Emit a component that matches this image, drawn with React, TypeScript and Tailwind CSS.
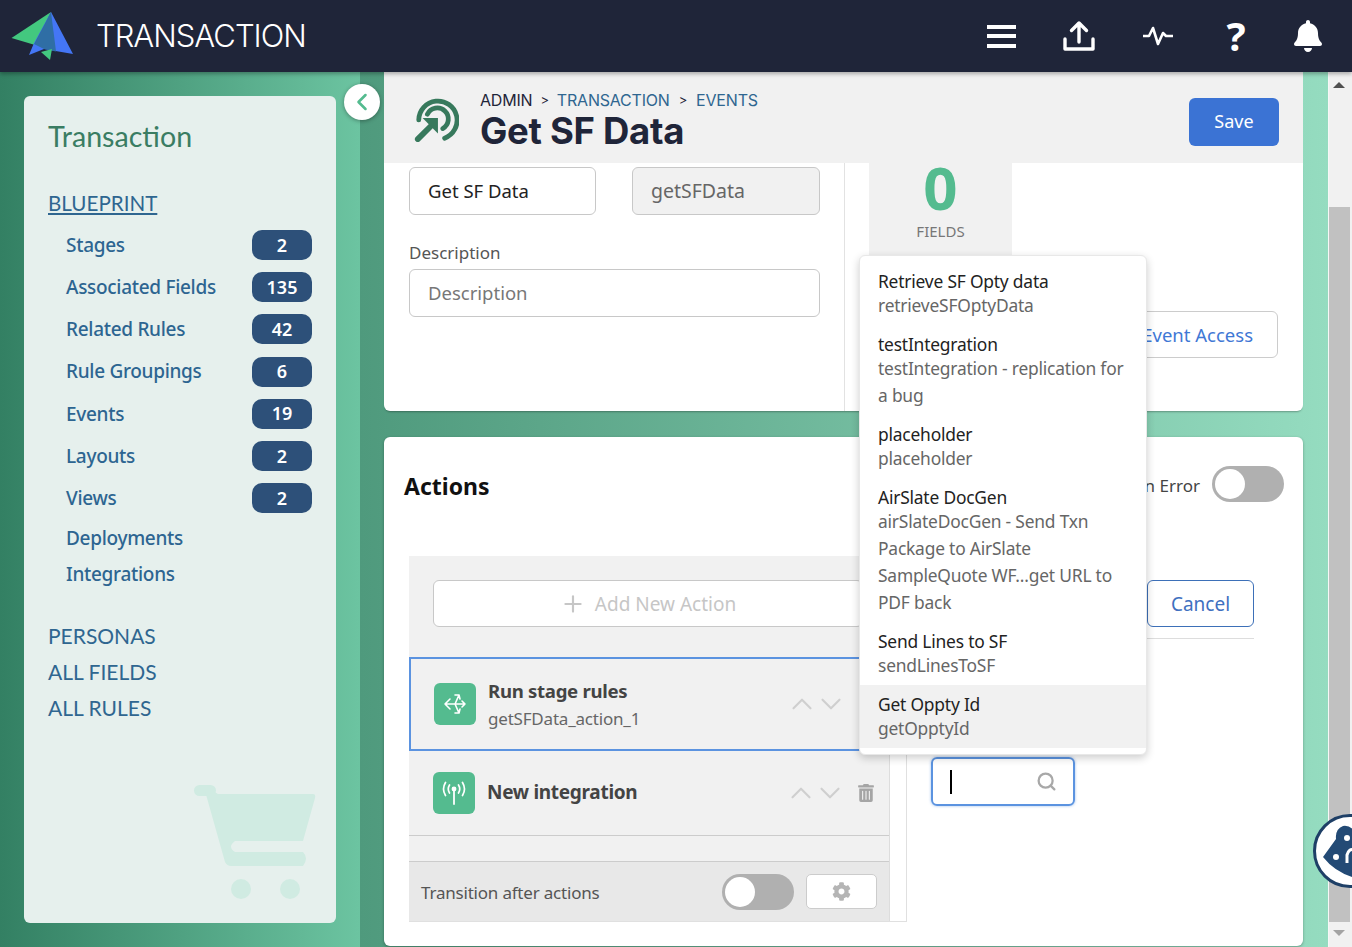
import React from "react";
import { ChevronDown, ChevronLeft, ChevronUp, Plus, Search } from "lucide-react";
import { FaBell, FaCog, FaTrashAlt } from "react-icons/fa";

const navItems = [
  { label: "Stages", count: "2" },
  { label: "Associated Fields", count: "135" },
  { label: "Related Rules", count: "42" },
  { label: "Rule Groupings", count: "6" },
  { label: "Events", count: "19" },
  { label: "Layouts", count: "2" },
  { label: "Views", count: "2" },
];

const dropdownItems = [
  { title: "Retrieve SF Opty data", sub: "retrieveSFOptyData" },
  { title: "testIntegration", sub: "testIntegration - replication for a bug" },
  { title: "placeholder", sub: "placeholder" },
  { title: "AirSlate DocGen", sub: "airSlateDocGen - Send Txn Package to AirSlate SampleQuote WF...get URL to PDF back" },
  { title: "Send Lines to SF", sub: "sendLinesToSF" },
  { title: "Get Oppty Id", sub: "getOpptyId", active: true },
];

const Toggle = () => (
  <div className="w-[72px] h-[36px] rounded-full bg-[#b0b0b0] flex items-center pl-[3px]">
    <div className="w-[30px] h-[30px] rounded-full bg-white" />
  </div>
);

const Logo = () => (
  <svg width="64" height="50" viewBox="0 0 64 50" className="shrink-0">
    <polygon points="0.5,27 40,1 24,34" fill="#43c87f" />
    <polygon points="40,1 62,43 33,38 18,44 23,32" fill="#4476f5" />
    <polygon points="40,1 23,33 33,38 45,40.5" fill="#2f6ea5" />
    <polygon points="30,41 39,49 41,38" fill="#43c87f" />
  </svg>
);

const TitleIcon = () => (
  <svg width="46" height="46" viewBox="0 0 48 48" fill="none" stroke="#37795c" className="shrink-0 mt-[2px]">
    <path d="M6 25 A20 20 0 1 1 33 44" strokeWidth="5" strokeLinecap="round" />
    <path d="M15 19 A11.5 11.5 0 1 1 31 34" strokeWidth="5" strokeLinecap="round" />
    <path d="M5 45 L19 31" strokeWidth="6" strokeLinecap="round" />
    <polygon points="10,23 26,23 26,39" fill="#37795c" stroke="none" />
  </svg>
);

const CartArt = () => (
  <svg width="124" height="116" viewBox="0 0 124 116" fill="#d0ebe2" className="absolute left-[169px] top-[687px]">
    <rect x="1" y="2" width="22" height="11" rx="5.5" />
    <path d="M12 8 L20 8 L25 11 L120 11 Q123 11 122 15 L110 58 L42 58 Q34 64 42 69 L110 69 Q116 75 110 83 L38 83 Q34 83 32 79 Z" />
    <circle cx="48" cy="106" r="10" />
    <circle cx="97" cy="106" r="10" />
  </svg>
);

const RulesIcon = () => (
  <svg width="24" height="24" viewBox="0 0 24 24" fill="none" stroke="white" strokeWidth="1.6" strokeLinecap="round" strokeLinejoin="round">
    <path d="M2 12 L22 12 M7 7 L2 12 L7 17 M12 12 L16 3 M12 3 L16 3 L17 7 M12 12 L16 21 M12 21 L16 21 L17 17 M19 9 L22 12 L19 15" />
  </svg>
);

const AntennaIcon = () => (
  <svg width="24" height="26" viewBox="0 0 24 26" fill="none" stroke="white" strokeWidth="1.7" strokeLinecap="round">
    <path d="M12 11 L12 24" strokeWidth="1.8" />
    <circle cx="12" cy="9" r="1.6" fill="white" />
    <path d="M7.5 5 Q5 9 7.5 13 M16.5 5 Q19 9 16.5 13 M3.5 2.5 Q-0.5 9 3.5 15.5 M20.5 2.5 Q24.5 9 20.5 15.5" />
  </svg>
);

const BearBadge = () => (
  <div className="absolute left-[1313px] top-[814px] w-[74px] h-[74px] rounded-full bg-white border-[3px] border-[#1e3f66] overflow-hidden">
    <svg width="68" height="68" viewBox="0 0 68 68">
      <path d="M7 40 L20 22 Q19 12 27 9 Q34 8 38 14 L68 14 L68 64 L36 60 Q18 54 7 40 Z" fill="#234a75" />
      <circle cx="20" cy="40" r="3" fill="white" />
      <circle cx="31" cy="21" r="3" fill="white" />
      <path d="M31 46 L31 38 Q33 31 38 33" fill="none" stroke="white" strokeWidth="3" />
    </svg>
  </div>
);

const Sidebar = () => (
  <aside className="w-[360px] shrink-0 p-[24px] bg-gradient-to-r from-[#338063] to-[#6cc4a1]">
    <div className="relative h-[827px] rounded-[6px] bg-[#e6f0ed] pl-[24px] pr-[24px] pt-[23px] font-['Lato',sans-serif] overflow-hidden">
      <h2 className="text-[28.6px] leading-[34px] text-[#3a7d63]">Transaction</h2>
      <a className="block mt-[37px] text-[20.6px] leading-[26px] text-[#2f6690] underline underline-offset-2">BLUEPRINT</a>
      <div className="mt-[8px] font-['Noto_Sans',sans-serif]">
        {navItems.map((item) => (
          <div key={item.label} className="flex items-center justify-between h-[42.2px] pl-[18px]">
            <span className="text-[19px] font-medium text-[#2d6591] tracking-[-0.3px]">{item.label}</span>
            <span className="w-[60px] h-[30px] rounded-[10px] bg-[#2d5079] text-white text-[18px] font-semibold flex items-center justify-center">{item.count}</span>
          </div>
        ))}
        <div className="pl-[18px] text-[19px] font-medium text-[#2d6591] tracking-[-0.3px]">
          <div className="h-[36px] mt-[1px] leading-[36px]">Deployments</div>
          <div className="h-[36px] leading-[36px]">Integrations</div>
        </div>
      </div>
      <div className="mt-[25px] text-[21px] text-[#2f6690]">
        <div className="h-[37px] leading-[37px]">PERSONAS</div>
        <div className="h-[36px] leading-[36px]">ALL FIELDS</div>
        <div className="h-[36px] leading-[36px]">ALL RULES</div>
      </div>
      <CartArt />
    </div>
  </aside>
);

const TitleBar = () => (
  <div className="h-[91px] bg-[#f1f1f1] flex items-center pl-[29px] pr-[24px]">
    <TitleIcon />
    <div className="ml-[21px] flex-1 font-['Inter',sans-serif] mt-[3px]">
      <div className="flex items-center text-[16px] leading-[24px] tracking-[-0.2px]">
        <span className="text-[#1f2539]">ADMIN</span>
        <span className="mx-[8px] text-[13px] text-[#1f2539]">&gt;</span>
        <span className="text-[#2f6690]">TRANSACTION</span>
        <span className="mx-[9px] text-[13px] text-[#1f2539]">&gt;</span>
        <span className="text-[#2f6690]">EVENTS</span>
      </div>
      <h1 className="text-[36.5px] leading-[38px] font-bold text-[#1f2539] tracking-[-0.3px]">Get SF Data</h1>
    </div>
    <button className="mt-[8px] w-[90px] h-[48px] rounded-[6px] bg-[#3b73d4] text-white text-[18px]">Save</button>
  </div>
);

const DetailsCard = () => (
  <section className="h-[248px] bg-white rounded-b-[6px] shadow-[0_2px_2px_-1px_rgba(0,0,0,0.3)] flex">
    <div className="w-[461px] shrink-0 border-r border-[#e2e2e2] pl-[25px] pt-[4px]">
      <div className="flex gap-[36px]">
        <div className="w-[187px] h-[48px] rounded-[6px] border border-[#c8c8c8] px-[18px] flex items-center text-[#222] text-[18.5px]">Get SF Data</div>
        <div className="w-[188px] h-[48px] rounded-[6px] border border-[#c8c8c8] bg-[#f1f1f1] px-[18px] flex items-center text-[#666] text-[19.5px]">getSFData</div>
      </div>
      <div className="mt-[27px] mb-[5px] leading-[22px] text-[#555] text-[17px]">Description</div>
      <div className="w-[411px] h-[48px] rounded-[6px] border border-[#c8c8c8] px-[18px] flex items-center text-[#777] text-[18.5px]">Description</div>
    </div>
    <div className="ml-[24px] w-[143px] h-[100px] shrink-0 bg-[#f1f1f1] flex flex-col items-center">
      <div className="text-[60px] leading-[48px] font-bold text-[#54bb8f]">0</div>
      <div className="mt-[9px] text-[15px] leading-[22px] text-[#777]">FIELDS</div>
    </div>
    <div className="flex-1 flex justify-end pr-[25px] pt-[148px]">
      <button className="w-[200px] h-[47px] rounded-[6px] border border-[#ccc] text-right pr-[24px] text-[#3f78d5] text-[18.5px]">Event Access</button>
    </div>
  </section>
);

const RowControls = ({ trash }: { trash?: boolean }) => (
  <div className="flex items-center text-[#cfcfcf]">
    <ChevronUp size={34} strokeWidth={1.5} className="mr-[-5px]" />
    <ChevronDown size={34} strokeWidth={1.5} />
    {trash && <FaTrashAlt size={18} className="ml-[10px] text-[#a5a5a5]" />}
  </div>
);

const ActionsCard = () => (
  <section className="mt-[26px] h-[509px] bg-white rounded-[6px] shadow-[0_1px_3px_rgba(0,0,0,0.3)] text-[18px]">
    <div className="h-[119px] flex items-start justify-between pt-[29px] pl-[20px] pr-[19px]">
      <h2 className="mt-[2px] text-[23px] leading-[36px] font-bold text-[#111]">Actions</h2>
      <div className="flex items-center gap-[12px]">
        <span className="mt-[3px] text-[#444] text-[17px]">On Error</span>
        <Toggle />
      </div>
    </div>
    <div className="flex ml-[25px]">
      <div className="w-[498px] h-[366px] border-r border-b border-[#e0e0e0] shrink-0">
        <div className="w-[481px] h-full bg-[#f1f1f1] border-r border-[#ddd] flex flex-col">
          <div className="px-[24px] pt-[24px]">
            <div className="w-[430px] h-[47px] rounded-[6px] border border-[#c8c8c8] bg-white flex items-center justify-center pt-[1px] text-[#c6c6c6] text-[19px]">
              <Plus size={26} strokeWidth={2} className="mr-[9px]" />
              Add New Action
            </div>
          </div>
          <div className="mt-[30px] h-[94px] border-2 border-[#5b93e0] flex items-center pl-[23px] pr-[39px]">
            <div className="w-[42px] h-[42px] rounded-[6px] bg-[#54bb8f] flex items-center justify-center"><RulesIcon /></div>
            <div className="ml-[12px] pt-[4px] flex-1">
              <div className="text-[18.6px] leading-[26px] font-bold text-[#444] tracking-[-0.3px]">Run stage rules</div>
              <div className="text-[17px] leading-[30px] text-[#666] tracking-[-0.2px]">getSFData_action_1</div>
            </div>
            <RowControls />
          </div>
          <div className="h-[85px] border-b border-[#ccc] flex items-center pl-[24px] pr-[14px]">
            <div className="w-[42px] h-[42px] rounded-[6px] bg-[#54bb8f] flex items-center justify-center"><AntennaIcon /></div>
            <div className="ml-[12px] mb-[2px] flex-1 text-[19px] font-bold text-[#444] tracking-[-0.3px]">New integration</div>
            <RowControls trash />
          </div>
          <div className="mt-[25px] flex-1 border-t border-[#ccc] bg-[#e8e8e8] flex items-center pl-[12px] pr-[12px]">
            <span className="flex-1 pt-[3px] text-[17px] text-[#555] tracking-[-0.2px]">Transition after actions</span>
            <Toggle />
            <div className="ml-[12px] w-[71px] h-[35px] rounded-[5px] border border-[#ccc] bg-white flex items-center justify-center text-[#b5b5b5]">
              <FaCog size={19} />
            </div>
          </div>
        </div>
      </div>
      <div className="w-[347px] pt-[24px]">
        <div className="flex justify-end pb-[11px] border-b border-[#ddd]">
          <button className="w-[107px] h-[47px] pt-[1px] rounded-[6px] border border-[#3d70b8] text-[#3f70c0] text-[19px]">Cancel</button>
        </div>
        <div className="mt-[118px] ml-[24px] w-[144px] h-[49px] rounded-[6px] border-2 border-[#5b93e0] shadow-[0_0_3px_rgba(91,147,224,0.6)] flex items-center justify-between pl-[17px] pr-[16px]">
          <div className="w-[2px] h-[24px] bg-black" />
          <Search size={21} strokeWidth={2.6} className="text-[#a8a8a8]" />
        </div>
      </div>
    </div>
  </section>
);

const Dropdown = () => (
  <div className="absolute left-[859px] top-[255px] w-[288px] py-[6px] rounded-[6px] bg-white border border-[#e8e8e8] shadow-[0_3px_8px_rgba(0,0,0,0.2)] text-[17.4px] tracking-[-0.2px]">
    {dropdownItems.map((item) => (
      <div key={item.title} className={`pl-[18px] pr-[16px] pt-[8px] pb-[6px] ${item.active ? "bg-[#f1f1f1]" : ""}`}>
        <div className="leading-[22px] text-[#222]">{item.title}</div>
        <div className="leading-[27px] text-[#666]">{item.sub}</div>
      </div>
    ))}
  </div>
);

const Scrollbar = () => (
  <div className="w-[24px] shrink-0 flex flex-col bg-[#f1f1f1] border-l border-[#f7f7f7]">
    <div className="h-[135px] flex justify-start pl-[4px] pt-[10px]">
      <div className="w-0 h-0 border-x-[6px] border-x-transparent border-b-[6px] border-b-[#505050]" />
    </div>
    <div className="w-[21px] h-[715px] bg-[#c1c1c1]" />
    <div className="flex justify-start pl-[4px] pt-[8px]">
      <div className="w-0 h-0 border-x-[6px] border-x-transparent border-t-[6px] border-t-[#a3a3a3]" />
    </div>
  </div>
);

const App = () => {
  return (
    <div className="relative w-[1352px] h-[947px] overflow-hidden flex flex-col font-['Noto_Sans',sans-serif]">
      <header className="relative z-10 h-[72px] shrink-0 bg-[#1f2539] shadow-[0_2px_4px_rgba(0,0,0,0.3)] flex items-center pl-[11px] pr-[28px]">
        <Logo />
        <span className="ml-[21px] flex-1 text-[31px] font-light text-white font-['Inter',sans-serif] tracking-[-1px]">TRANSACTION</span>
        <div className="flex items-center text-white">
          <div className="w-[29px] flex flex-col gap-[5.5px]">
            <div className="h-[4px] bg-white" />
            <div className="h-[4px] bg-white" />
            <div className="h-[4px] bg-white" />
          </div>
          <svg width="32" height="32" viewBox="0 0 32 32" fill="none" stroke="white" strokeWidth="3.4" strokeLinecap="round" strokeLinejoin="round" className="ml-[47px]">
            <path d="M16 22 V3 M8.5 10.5 L16 3 L23.5 10.5 M2 19 V29 H30 V19" />
          </svg>
          <svg width="32" height="24" viewBox="0 0 32 24" fill="none" stroke="white" strokeWidth="2.6" strokeLinejoin="round" className="ml-[47px]">
            <path d="M1 12 H7 L11 4 L16 20 L21 9 L24 12 H31" />
          </svg>
          <span className="ml-[48px] w-[28px] text-center text-[40px] leading-[40px] font-bold">?</span>
          <FaBell size={32} className="ml-[42px]" />
        </div>
      </header>
      <div className="flex-1 flex min-h-0">
        <Sidebar />
        <main className="w-[968px] shrink-0 pl-[24px] pr-[25px] overflow-hidden bg-gradient-to-r from-[#4f9a7d] to-[#95dcc0]">
          <TitleBar />
          <DetailsCard />
          <ActionsCard />
        </main>
        <Scrollbar />
      </div>
      <button className="absolute left-[344px] top-[84px] z-10 w-[36px] h-[36px] rounded-full bg-white shadow-[0_1px_4px_rgba(0,0,0,0.35)] flex items-center justify-center text-[#54bb8f]">
        <ChevronLeft size={28} strokeWidth={2.2} />
      </button>
      <Dropdown />
      <BearBadge />
    </div>
  );
};

export default App;
